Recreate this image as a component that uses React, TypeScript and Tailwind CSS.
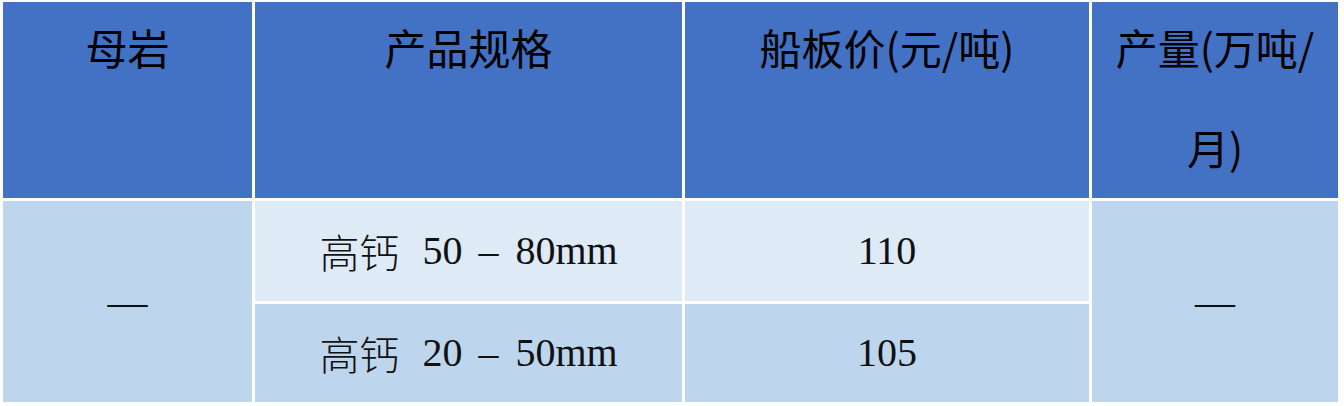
const head = "bg-[#4371c4] text-black text-[42px] leading-[100px] text-center font-['Noto_Sans_CJK_SC','Noto_Sans',sans-serif]"
const body = "flex items-center justify-center text-[#111] text-[40px] font-['Liberation_Serif','Noto_Sans_CJK_SC',serif]"

function Spec({ from, to }: { from: string; to: string }) {
  return (
    <>
      <span className="font-['Noto_Sans_CJK_SC',sans-serif] font-light">高钙</span>
      <span className="ml-[23px]">{from}</span>
      <span className="ml-[16px] mr-[17px]">–</span>
      <span>{to}mm</span>
    </>
  )
}

export default function App() {
  return (
    <div className="w-[1344px] h-[406px] bg-white pt-[2px] pl-[3px]">
      <div className="grid grid-cols-[249px_427px_404px_246px] grid-rows-[196px_100px_98px] gap-[3px]">
        <div className={head}><div className="-mt-[5px]">母岩</div></div>
        <div className={head}><div className="-mt-[5px]">产品规格</div></div>
        <div className={head}><div className="-mt-[5px]">船板价(元/吨)</div></div>
        <div className={head + " px-2"}><div className="-mt-[5px]">产量(万吨/月)</div></div>

        <div className={body + " row-span-2 bg-[#bdd6ee]"}>—</div>
        <div className={body + " bg-[#deeaf6]"}>
          <Spec from="50" to="80" />
        </div>
        <div className={body + " bg-[#deeaf6]"}>110</div>
        <div className={body + " row-span-2 bg-[#bdd6ee]"}>—</div>

        <div className={body + " bg-[#bdd6ee]"}>
          <Spec from="20" to="50" />
        </div>
        <div className={body + " bg-[#bdd6ee]"}>105</div>
      </div>
    </div>
  )
}
